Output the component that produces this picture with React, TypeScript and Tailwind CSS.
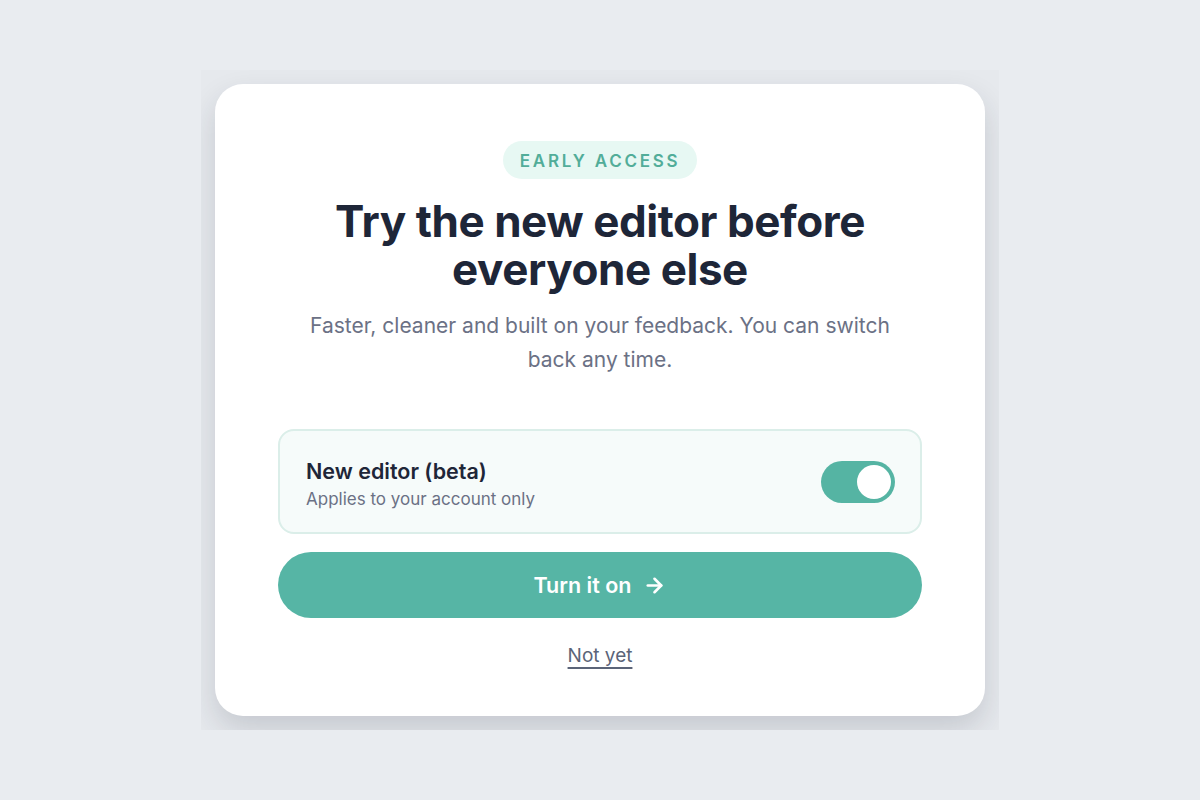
import { ArrowRight } from 'lucide-react';
import { useState } from 'react';

export default function App() {
  const [enabled, setEnabled] = useState(true);

  return (
    <div
      className="w-full h-[800px] bg-[#e9ecf0] flex items-center justify-center"
      style={{ fontFamily: 'Inter, "Noto Sans", sans-serif' }}
    >
      {/* wrapper clips the card shadow */}
      <div className="w-[798px] h-[660px] p-[14px] overflow-hidden bg-[#e6e9ed]">
        <div className="w-[770px] h-[632px] bg-white rounded-[28px] shadow-[0_14px_30px_rgba(30,38,56,0.16)] px-[63px] pt-[57px] flex flex-col items-center">
          <div className="h-[38px] px-[17px] pt-[3px] rounded-full bg-[#e7f8f3] flex items-center text-[17px] font-semibold tracking-[0.16em] text-[#52ad99]">
            EARLY ACCESS
          </div>

          <h1 className="mt-[18px] text-[44px] leading-[48px] font-bold text-[#1e2638] text-center tracking-[-0.01em]">
            Try the new editor before
            <br />
            everyone else
          </h1>

          <p className="mt-[16px] text-[21px] leading-[34px] text-[#6b7185] text-center">
            Faster, cleaner and built on your feedback. You can switch
            <br />
            back any time.
          </p>

          <div className="mt-[52px] w-full h-[105px] rounded-[16px] border-2 border-[#dbeee9] bg-[#f6fbfa] pl-[26px] pr-[25px] flex items-center justify-between">
            <div className="flex flex-col pt-[5px]">
              <span className="text-[21.5px] leading-[30px] font-semibold text-[#1e2638]">New editor (beta)</span>
              <span className="text-[17px] leading-[26px] text-[#6b7185]">Applies to your account only</span>
            </div>
            <button
              onClick={() => setEnabled(!enabled)}
              className={`w-[74px] h-[42px] rounded-full p-[4px] flex items-center ${enabled ? 'bg-[#55b4a3] justify-end' : 'bg-[#cbd2da] justify-start'}`}
            >
              <span className="w-[34px] h-[34px] rounded-full bg-white block" />
            </button>
          </div>

          <button className="mt-[18px] w-full h-[66px] rounded-full bg-[#56b5a5] flex items-center justify-center gap-[12px] text-white text-[21.5px] font-semibold">
            Turn it on
            <ArrowRight size={23} strokeWidth={2.75} />
          </button>

          <a href="#" className="mt-[24px] text-[19px] leading-[28px] text-[#5b6478] underline underline-offset-[5px] decoration-[1.5px]">
            Not yet
          </a>
        </div>
      </div>
    </div>
  );
}
